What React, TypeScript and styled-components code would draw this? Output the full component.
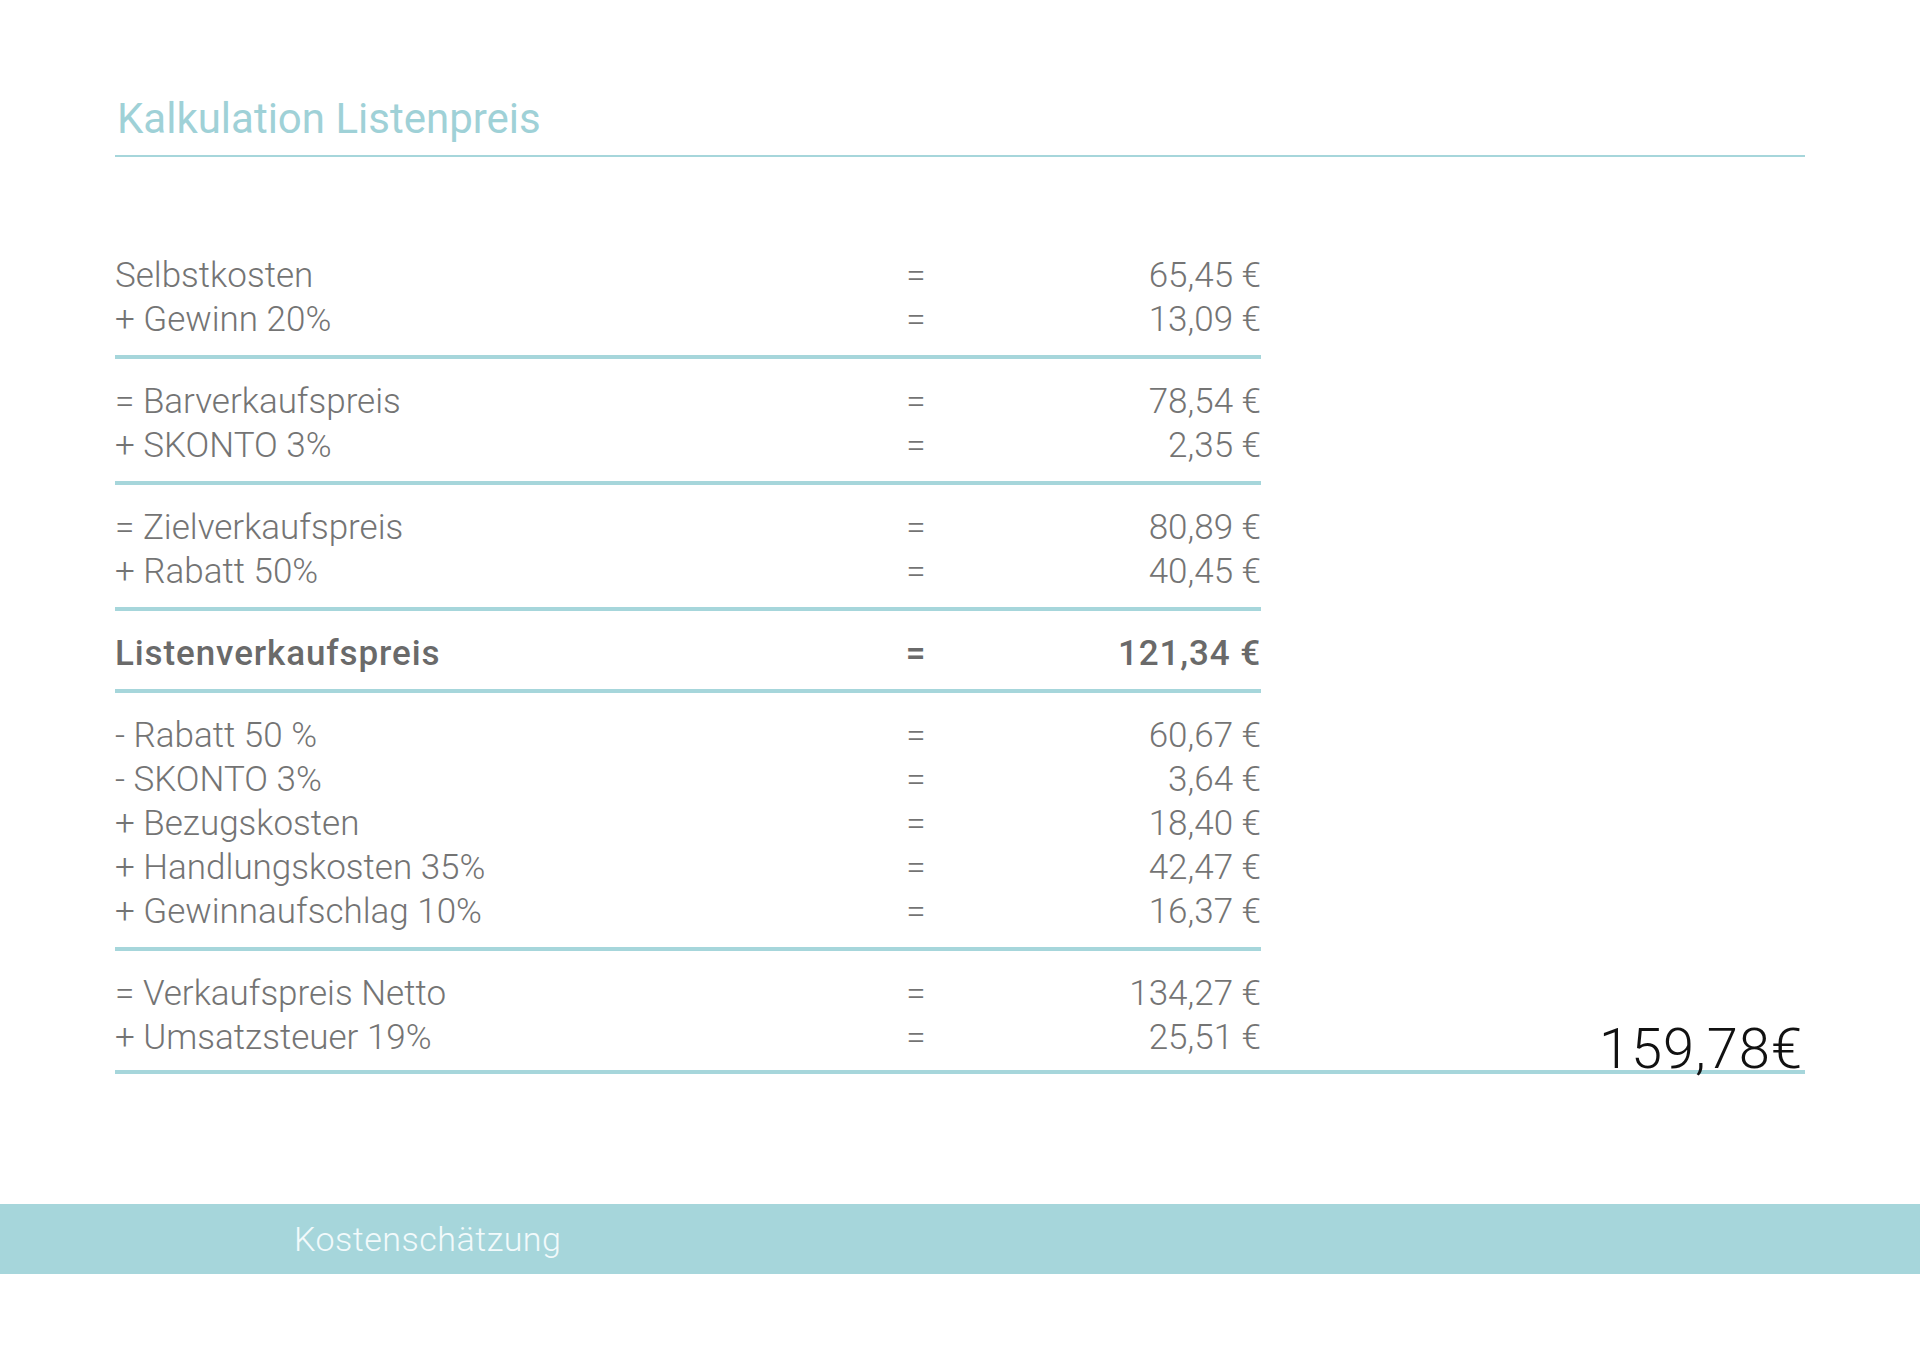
import React from "react";
import styled, { createGlobalStyle } from "styled-components";

const GlobalStyle = createGlobalStyle`
  html, body {
    margin: 0;
    padding: 0;
    background: #ffffff;
  }
  body {
    font-family: Roboto, "Open Sans", "Liberation Sans", sans-serif;
  }
`;

const Page = styled.div`
  width: 1920px;
  height: 1358px;
  background: #ffffff;
  display: flex;
  flex-direction: column;
`;

const Content = styled.div`
  padding: 0 115px;
  display: flex;
  flex-direction: column;
`;

const Title = styled.h1`
  margin: 91px 0 0;
  padding: 0 0 8px 2px;
  font-family: Roboto, "Open Sans", sans-serif;
  font-weight: 400;
  font-size: 42px;
  line-height: 56px;
  color: #9fd1d7;
  border-bottom: 2px solid #a6d6db;
`;

const Table = styled.div`
  margin-top: 76px;
  display: flex;
  flex-direction: column;
`;

const Group = styled.div<{ $wide?: boolean }>`
  display: flex;
  align-items: flex-end;
  justify-content: space-between;
  width: ${(p) => (p.$wide ? "100%" : "1146px")};
  padding: 20px 0 ${(p) => (p.$wide ? "11px" : "14px")};
  border-bottom: 4px solid #a6d6db;
`;

const Rows = styled.div`
  width: 1146px;
  display: flex;
  flex-direction: column;
`;

const Row = styled.div<{ $bold?: boolean }>`
  display: grid;
  grid-template-columns: 786px 30px 1fr;
  height: 44px;
  align-items: center;
  font-family: Roboto, "Open Sans", sans-serif;
  font-size: 35px;
  font-weight: ${(p) => (p.$bold ? 500 : 300)};
  color: ${(p) => (p.$bold ? "#6a6a6a" : "#747474")};
  letter-spacing: ${(p) => (p.$bold ? "0.9px" : "0")};
  white-space: nowrap;
`;

const Label = styled.span``;

const Eq = styled.span`
  text-align: center;
`;

const Value = styled.span`
  text-align: right;
`;

const Total = styled.div`
  font-family: Roboto, "Open Sans", sans-serif;
  font-weight: 300;
  font-size: 56px;
  line-height: 56px;
  color: #111111;
  letter-spacing: 1px;
  margin-bottom: -18px;
  padding-right: 2px;
`;

const Footer = styled.div`
  margin-top: 130px;
  height: 70px;
  background: #a6d6db;
  display: flex;
  align-items: center;
  padding-left: 294px;
  font-family: Roboto, "Open Sans", sans-serif;
  font-weight: 300;
  font-size: 34px;
  color: #f2fafb;
  letter-spacing: 0.5px;
`;

type Line = { label: string; value: string; bold?: boolean };

const groups: Line[][] = [
  [
    { label: "Selbstkosten", value: "65,45 €" },
    { label: "+ Gewinn 20%", value: "13,09 €" },
  ],
  [
    { label: "= Barverkaufspreis", value: "78,54 €" },
    { label: "+ SKONTO 3%", value: "2,35 €" },
  ],
  [
    { label: "= Zielverkaufspreis", value: "80,89 €" },
    { label: "+ Rabatt 50%", value: "40,45 €" },
  ],
  [{ label: "Listenverkaufspreis", value: "121,34 €", bold: true }],
  [
    { label: "- Rabatt 50 %", value: "60,67 €" },
    { label: "- SKONTO 3%", value: "3,64 €" },
    { label: "+ Bezugskosten", value: "18,40 €" },
    { label: "+ Handlungskosten 35%", value: "42,47 €" },
    { label: "+ Gewinnaufschlag 10%", value: "16,37 €" },
  ],
];

const last: Line[] = [
  { label: "= Verkaufspreis Netto", value: "134,27 €" },
  { label: "+ Umsatzsteuer 19%", value: "25,51 €" },
];

const renderRows = (lines: Line[]) =>
  lines.map((l) => (
    <Row key={l.label} $bold={l.bold}>
      <Label>{l.label}</Label>
      <Eq>=</Eq>
      <Value>{l.value}</Value>
    </Row>
  ));

export default function App() {
  return (
    <>
      <GlobalStyle />
      <Page>
        <Content>
          <Title>Kalkulation Listenpreis</Title>
          <Table>
            {groups.map((g, i) => (
              <Group key={i}>
                <Rows>{renderRows(g)}</Rows>
              </Group>
            ))}
            <Group $wide>
              <Rows>{renderRows(last)}</Rows>
              <Total>159,78€</Total>
            </Group>
          </Table>
        </Content>
        <Footer>Kostenschätzung</Footer>
      </Page>
    </>
  );
}
